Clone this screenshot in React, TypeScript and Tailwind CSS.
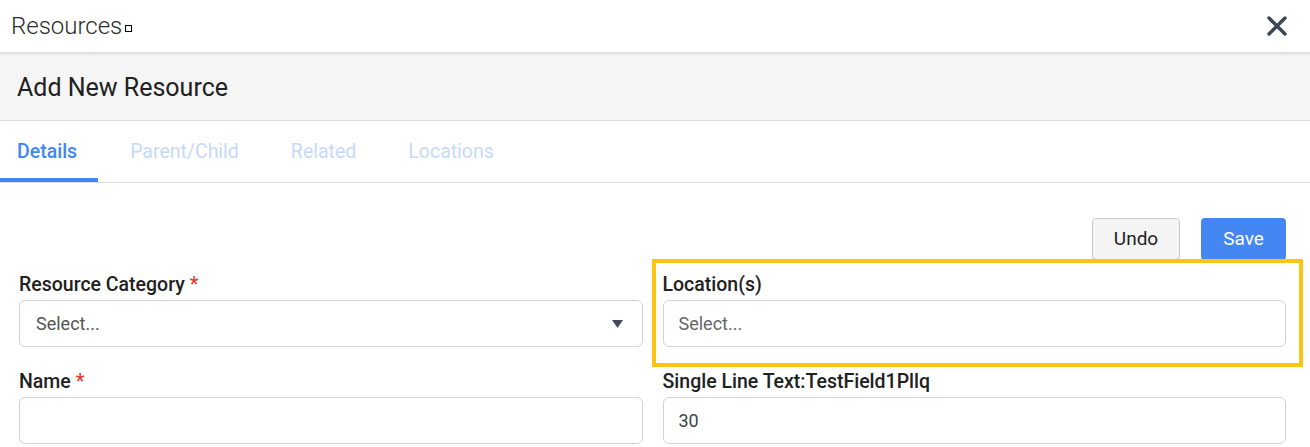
import React, { useState } from "react";

const tabs = ["Details", "Parent/Child", "Related", "Locations"];

function Field({ label, required, children }: { label: string; required?: boolean; children: React.ReactNode }) {
  return (
    <div>
      <label className="block text-[19.5px] font-medium text-[#212121] leading-[22px] mb-[4px]">
        {label}
        {required && <span className="text-[#e53935] ml-[5px]">*</span>}
      </label>
      {children}
    </div>
  );
}

export default function App() {
  const [active, setActive] = useState(0);

  return (
    <div className="w-[1310px] h-[447px] overflow-hidden bg-white font-['Roboto',sans-serif]">
      {/* top bar */}
      <div className="h-[52px] flex items-center justify-between pl-[11px] pr-[22px]">
        <div className="flex items-center text-[24px] font-light text-[#2b2b2b] leading-none">
          Resources
          <span className="inline-block w-[7px] h-[7px] border border-black ml-[3px] mt-[4px]" />
        </div>
        <button className="text-[#3c4654]">
          <svg width="22" height="22" viewBox="0 0 22 22">
            <path d="M3 3 L19 19 M19 3 L3 19" stroke="currentColor" strokeWidth="3.4" strokeLinecap="round" />
          </svg>
        </button>
      </div>
      <div className="h-[3px] bg-gradient-to-b from-[#d9d9d9] to-[#ececec]" />

      {/* title band */}
      <div className="h-[66px] bg-[#f5f5f5] border-b border-[#dcdcdc] flex items-center px-[17px]">
        <h2 className="text-[25px] text-[#212121]">Add New Resource</h2>
      </div>

      {/* tabs */}
      <div className="flex border-b border-[#dedede] h-[62px]">
        {tabs.map((t, i) => (
          <button
            key={t}
            onClick={() => setActive(i)}
            className={
              (i === 0 ? "pl-[17px] pr-[21px] " : "pl-[32px] pr-[20px] ") +
              (i === active
                ? "text-[19.5px] font-medium text-[#4285f4] border-b-[4px] border-[#4285f4] pt-[4px]"
                : "text-[19.5px] text-[#c6d9fa] border-b-[4px] border-transparent pt-[4px]")
            }
          >
            {t}
          </button>
        ))}
      </div>

      {/* body */}
      <div className="pl-[19px] pr-[24px] pt-[35px]">
        <div className="flex justify-end gap-[21px]">
          <button className="w-[88px] h-[42px] rounded-[4px] border border-[#c8c8c8] bg-[#f4f4f4] text-[19px] text-[#212121]">
            Undo
          </button>
          <button className="w-[85px] h-[42px] rounded-[4px] bg-[#4587f2] text-[19px] text-white">Save</button>
        </div>

        <div className="grid grid-cols-2 gap-x-[20px] gap-y-[24px] mt-[14px]">
          <Field label="Resource Category" required>
            <div className="h-[47px] rounded-[6px] border border-[#d0d4da] flex items-center justify-between pl-[16px] pr-[19px]">
              <span className="text-[18px] text-[#555]">Select...</span>
              <svg width="11" height="8" viewBox="0 0 11 8">
                <path d="M0 0 H11 L5.5 8 Z" fill="#444b55" />
              </svg>
            </div>
          </Field>

          <div className="relative">
            <div className="absolute -left-[11px] -top-[15px] -right-[17px] -bottom-[20px] border-[4px] border-[#fcc514] pointer-events-none" />
            <Field label="Location(s)">
              <div className="h-[47px] rounded-[6px] border border-[#d0d4da] flex items-center pl-[15px]">
                <span className="text-[18px] text-[#666]">Select...</span>
              </div>
            </Field>
          </div>

          <Field label="Name" required>
            <input className="w-full h-[47px] rounded-[6px] border border-[#d0d4da] px-[16px] text-[18px] outline-none" />
          </Field>

          <Field label="Single Line Text:TestField1Pllq">
            <input
              defaultValue="30"
              className="w-full h-[47px] rounded-[6px] border border-[#d0d4da] px-[15px] text-[18px] text-[#444] outline-none"
            />
          </Field>
        </div>
      </div>
    </div>
  );
}
